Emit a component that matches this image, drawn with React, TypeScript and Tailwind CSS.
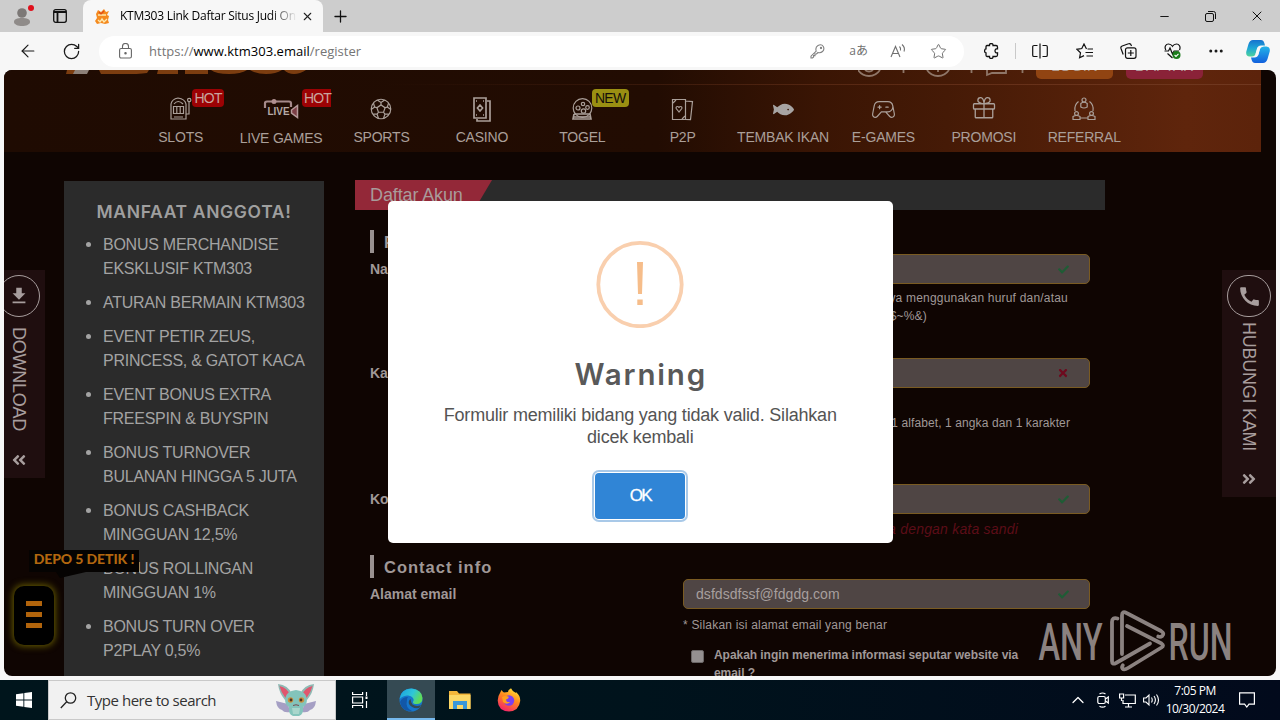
import type { ReactNode } from "react";
import { FaAngleDoubleLeft, FaAngleDoubleRight, FaCheck, FaFish, FaTimes } from "react-icons/fa";
import { MdCall, MdFileDownload } from "react-icons/md";
import { PiGameControllerLight, PiGiftLight, PiSoccerBallLight } from "react-icons/pi";
import { ArrowLeft, ChevronUp, Ellipsis, Minus, Plus, RotateCw, Star, X } from "lucide-react";

function TabStrip() {
  return (
    <div className="flex h-8 items-center bg-[#cdcdcd]">
      <svg className="ml-3 overflow-visible" width="20" height="20" viewBox="0 0 20 20">
        <circle cx="10" cy="7" r="4.8" fill="#7c7876" />
        <path d="M2 16c0-3 3-4 8-4s8 1 8 4c0 2.500-4 4-8 4s-8-1.500-8-4Z" fill="#8f8b89" />
        <circle cx="19" cy="2" r="3" fill="#e0101c" />
      </svg>
      <svg className="ml-[21px]" width="14" height="14" viewBox="0 0 14 14" fill="none" stroke="#111" strokeWidth="1.300">
        <rect x=".7" y=".7" width="12.600" height="12.600" rx="2" />
        <path d="M1 3h12M4.500 3v10" strokeWidth="1.800" />
      </svg>
      <div className="ml-4 flex h-8 w-[240px] items-center rounded-t-lg bg-[#f7f7f7] pl-3">
        <svg width="15" height="15" viewBox="0 0 15 15">
          <path d="M1 5 3 1l3 2 3-3 2 3 3-1-2 4 2 1-1 4 1 3-4 1-4-1-4 1-2-3 2-3Z" fill="#f58a1f" />
          <path d="M3 6h8M3 11l2 2 2-3 2 3 3-3" stroke="#fde9b0" strokeWidth="1.400" fill="none" />
          <path d="M4 3l2 2 3-3" stroke="#e04a1a" strokeWidth="1.200" fill="none" />
        </svg>
        <span className="ml-[10px] w-[177px] overflow-hidden bg-gradient-to-r from-black from-85% to-transparent bg-clip-text font-['Open_Sans',sans-serif] text-xs tracking-[-0.250px] whitespace-nowrap text-transparent">
          KTM303 Link Daftar Situs Judi On
        </span>
        <X className="ml-[4px]" size={13} strokeWidth={2} color="#222" />
      </div>
      <Plus className="ml-2" size={19} strokeWidth={1.600} color="#111" />
      <div className="ml-auto flex items-center gap-[34px] pr-[15px] text-[#111]">
        <Minus className="-mr-px ml-px" size={13} strokeWidth={1.800} />
        <svg className="-mr-px ml-px" width="11" height="11" viewBox="0 0 11 11" fill="none" stroke="#111">
          <rect x=".5" y="2.500" width="8" height="8" rx="1.500" />
          <path d="M3 .500h5.500a2 2 0 0 1 2 2V8" />
        </svg>
        <X size={16} strokeWidth={1.500} />
      </div>
    </div>
  );
}

function Toolbar() {
  return (
    <div className="flex h-[38px] items-center bg-[#f7f7f7] text-[#1a1a1a]">
      <ArrowLeft className="ml-[18px]" size={20} strokeWidth={1.400} />
      <RotateCw className="ml-6" size={19} strokeWidth={1.600} />
      <div className="ml-[18px] flex h-[31px] w-[865px] items-center rounded-full bg-white pl-5">
        <svg width="13" height="16" viewBox="0 0 13 16" fill="none" stroke="#666" strokeWidth="1.100">
          <rect x=".6" y="5.500" width="11.800" height="9.500" rx="1.500" />
          <path d="M3.500 5.500V3.500a3 3 0 0 1 6 0v2" />
          <circle cx="6.500" cy="10.200" r=".7" fill="#666" />
        </svg>
        <span className="mt-px ml-[17px] font-['Open_Sans',sans-serif] text-[13px] tracking-[0.020px] whitespace-nowrap text-[#757575]">
          https://<span className="text-black">www.ktm303.email</span>/register
        </span>
        <div className="ml-auto flex items-center pr-[17px] text-[#707070]">
          <svg width="15" height="15" viewBox="0 0 15 15" fill="none" stroke="#808080" strokeWidth="1.100">
            <path d="M6.200 7.200Q5 3.200 8 1.500q3.500-1.800 5.300 1 1.500 3-.8 5Q10.500 9.300 8 8.500L6.500 10H5v1.600H3.600V13L2.500 14H1v-1.800Z" />
            <circle cx="11" cy="4" r=".6" />
          </svg>
          <span className="ml-[24px] font-['Open_Sans','Noto_Sans_CJK_JP',sans-serif] text-[12px] leading-none">aあ</span>
          <svg className="ml-[22px]" width="17" height="16" viewBox="0 0 17 16" fill="none" stroke="#707070" strokeWidth="1.100">
            <path d="M1 14 5.500 3.500 10 14M2.600 10.500h5.800M9.500 3.500q1.500 1.500 1 4M12 1.500q3.500 3 2 7" />
          </svg>
          <Star className="ml-[23px]" size={17} strokeWidth={1.400} />
        </div>
      </div>
      <svg className="ml-[20px]" width="15" height="16" viewBox="0 0 15 16" fill="none" stroke="#111" strokeWidth="1.300">
        <path d="M3 2.500h2.500q-.2-2 1.700-2t1.800 2H12q1.500 0 1.500 1.500v1.800q-2.500-.3-2.500 2t2.500 2V12q0 1.500-1.500 1.500H9q.1 2-1.800 2t-1.700-2H3q-1 0-1-1.500V9.800Q.6 9.800.6 7.900T2 5.900V4q0-1.500 1-1.500Z" />
      </svg>
      <div className="ml-[16px] h-4 w-px bg-[#c9c9c9]" />
      <svg className="ml-4" width="16" height="16" viewBox="0 0 16 16" fill="none" stroke="#111" strokeWidth="1.200">
        <path d="M5.500 2.500H2a1.300 1.300 0 0 0-1.300 1.300v8.400A1.300 1.300 0 0 0 2 13.500h3.500M8 .5v15M10.500 2.500H14a1.300 1.300 0 0 1 1.300 1.300v8.400a1.300 1.300 0 0 1-1.300 1.300h-3.500" />
      </svg>
      <svg className="ml-[28px]" width="18" height="16" viewBox="0 0 18 16" fill="none" stroke="#111" strokeWidth="1.200">
        <path d="M10.500 6 8 1 5.800 5.500.8 6.300l3.700 3.500-.9 5 4.400-2.200M11.500 6H17M9.500 9.500H17M10.500 13H17" />
      </svg>
      <svg className="ml-[26px]" width="17" height="16" viewBox="0 0 17 16" fill="none" stroke="#111" strokeWidth="1.200">
        <path d="M3.200 11.500 1 5.500A2 2 0 0 1 2.200 3L8.500.8a2 2 0 0 1 2.600 1.200L11.500 3" />
        <rect x="5.500" y="4.800" width="10.500" height="10.500" rx="2" />
        <path d="M10.800 7v6M7.800 10h6" />
      </svg>
      <svg className="ml-[27px]" width="18" height="17" viewBox="0 0 18 17">
        <path
          d="M1.800 7C0 3.500 2 1 4.500 1S8 2.500 8.500 3.300C9 2.500 10 1 12.500 1S17 3.500 15.500 7M.5 8h4l1.500-3 2.500 6 1.600-3h5M3.500 10.500l5 4.500"
          fill="none"
          stroke="#111"
          strokeWidth="1.200"
        />
        <circle cx="12.500" cy="12" r="4" fill="#1c7c1c" />
        <path d="m10.600 12 1.400 1.400 2.500-2.600" fill="none" stroke="#fff" strokeWidth="1.100" />
      </svg>
      <Ellipsis className="ml-[25px]" size={18} strokeWidth={2} />
      <svg className="ml-[21px]" width="24" height="23" viewBox="0 0 24 23">
        <defs>
          <linearGradient id="copilotA" x1="0" y1="0" x2="0" y2="1">
            <stop offset="0" stopColor="#1672cf" />
            <stop offset=".5" stopColor="#1ea7d6" />
            <stop offset="1" stopColor="#4fd39b" />
          </linearGradient>
          <linearGradient id="copilotB" x1="0" y1="0" x2="0" y2="1">
            <stop offset="0" stopColor="#22b4e8" />
            <stop offset="1" stopColor="#1260dd" />
          </linearGradient>
        </defs>
        <path d="M7 0h8q2.500 0 3.300 3l.7 2.500h-4q-3 0-4 3L9.500 14q-.8 2.500-3.500 2.500H3.500Q-.5 16 .3 11.500L2.500 4Q3.800 0 7 0Z" fill="url(#copilotA)" />
        <path d="M17 23H9q-2.500 0-3.300-3L5 17.500h3.500q3 0 4-3L14 9q1-2.500 4-2.500h2.500q4 .5 3.200 5L21.500 19q-1.300 4-4.500 4Z" fill="url(#copilotB)" />
        <path d="m12.800 8-2 6.500" stroke="#f7f7f7" strokeWidth="2.600" />
      </svg>
    </div>
  );
}

const line = { fill: "none", stroke: "#aa9f99", strokeWidth: 1.200 };

function SlotIcon() {
  return (
    <svg width="23" height="24" viewBox="0 0 23 24" {...line}>
      <path d="M2 22V7q1-5 7-6 7 1 8 6v15ZM5 20h9M4.500 9.500h10v7h-10ZM7.800 9.500v7M11.200 9.500v7M5 7q4-5 9 0M17 17h3V5" />
      <circle cx="20.200" cy="3" r="1.700" />
    </svg>
  );
}

function LiveIcon() {
  return (
    <svg width="36" height="20" viewBox="0 0 36 20">
      <path d="M2 9V4q0-1.500 2-1.500h22q2 0 2 2V8" fill="none" stroke="#a58a8a" strokeWidth="2.200" />
      <circle cx="11" cy="2.500" r="2.500" fill="#b09090" />
      <path d="m28.500 11 6-4.500v12l-6-4.500Z" fill="#7c3f46" stroke="#b59a9a" strokeWidth="1.500" />
      <text x="4.500" y="16" fontSize="10.500" fontWeight="700" fill="#b5aaa6" fontFamily="Liberation Sans" textLength="22" lengthAdjust="spacingAndGlyphs">
        LIVE
      </text>
    </svg>
  );
}

function CasinoIcon() {
  return (
    <svg width="20" height="25" viewBox="0 0 20 25" {...line}>
      <path d="M2 1h12v20H2ZM15 4h3v20H5v-2" strokeWidth="1.700" />
      <path d="m8 8 2.600 3L8 14l-2.600-3ZM4 4h1M11 18h1M4 18h1M11 4h1" strokeWidth="1.600" />
    </svg>
  );
}

function TogelIcon() {
  return (
    <svg width="23" height="23" viewBox="0 0 23 23" {...line}>
      <circle cx="11.500" cy="10" r="9.300" />
      <path d="M3 16h16l1 5H2l1-5M2 19h18" strokeWidth="1.600" />
      <circle cx="12" cy="6" r="1.700" />
      <circle cx="7" cy="10" r="2" />
      <circle cx="12.500" cy="13" r="2.200" />
      <circle cx="16.500" cy="9.500" r="1.800" />
    </svg>
  );
}

function CardsIcon() {
  return (
    <svg width="23" height="23" viewBox="0 0 23 23" {...line}>
      <path d="M1.500 1.500h13v20h-13ZM14.500 3l7 .6-2 18-5-.2" />
      <path d="m8 14-2.800-3.500q-.5-2 1.300-2Q8 8.500 8 10q0-1.500 1.500-1.500 1.800 0 1.300 2ZM2 5l3-3M11 21l3-3" />
    </svg>
  );
}

function ReferralIcon() {
  return (
    <svg width="24" height="24" viewBox="0 0 24 24" {...line}>
      <circle cx="12" cy="3" r="2" />
      <path d="M8.800 10V6.500q3-2.500 6.400 0V10q-3.200 2-6.400 0ZM6.500 4.500Q2 8 3 14M17.500 4.500Q22 8 21 14M8 21h8" />
      <circle cx="4.500" cy="16.500" r="1.900" />
      <circle cx="19.500" cy="16.500" r="1.900" />
      <path d="M1 22.500v-3q3.500-2 7 0v3ZM16 22.500v-3q3.500-2 7 0v3Z" />
    </svg>
  );
}

type NavEntry = { label: string; icon: ReactNode; badge?: string };

const nav: NavEntry[] = [
  { label: "SLOTS", icon: <SlotIcon />, badge: "HOT" },
  { label: "LIVE GAMES", icon: <LiveIcon />, badge: "HOT" },
  { label: "SPORTS", icon: <PiSoccerBallLight size={26} /> },
  { label: "CASINO", icon: <CasinoIcon /> },
  { label: "TOGEL", icon: <TogelIcon />, badge: "NEW" },
  { label: "P2P", icon: <CardsIcon /> },
  { label: "TEMBAK IKAN", icon: <FaFish size={21} color="#a7a4a3" /> },
  { label: "E-GAMES", icon: <PiGameControllerLight size={25} /> },
  { label: "PROMOSI", icon: <PiGiftLight size={28} /> },
  { label: "REFERRAL", icon: <ReferralIcon /> },
];

function SiteHeader() {
  return (
    <div className="h-[82px] w-[1257px] bg-[linear-gradient(90deg,#1f0b02_0%,#220c02_52%,#3a1504_65%,#451a06_75%,#5f250c_94%,#5c230b_100%)]">
      <div className="flex h-[14px] items-start">
        <svg className="ml-[60px]" width="245" height="4" viewBox="0 0 245 4" fill="#7c3d10">
          <path d="M3 0h18l-4 4H2Z" />
          <path d="M11 0h14l-2 4H9Z" fill="#8c8078" />
          <path d="M35 0h50l-2 3q-12 2-46 1ZM94 0h20v4H93ZM121 0h23v4h-23ZM147 0h36q-6 4-18 4-13 0-18-4ZM186 0h32q-6 4-16 4t-16-4ZM220 0h22q-6 4-12 4t-10-4Z" />
        </svg>
        <div className="ml-[549px] flex items-start">
          <svg width="170" height="9" viewBox="0 0 170 9" fill="none" stroke="#8f7668" strokeWidth="1.800">
            <path d="M0 0q4 6 11 6t11-6M69 0q4 6 11 6t11-6M45.500 0v3M113.500 0v3M164.500 0v3M129 0v5l5-2h14V0" />
            <path d="M7 0q4 3 8 0M80 0v2" />
          </svg>
          <div className="ml-[8px] flex h-[9px] w-[77px] items-end justify-center overflow-hidden rounded-b-[5px] bg-[#914412] pb-[6px] font-['Liberation_Sans',sans-serif] text-[15px] leading-[15px] text-[#b29a8c]">
            LOGIN
          </div>
          <div className="ml-[13px] flex h-[9px] w-[77px] items-end justify-center overflow-hidden rounded-b-[5px] bg-[#8a2238] pb-[6px] font-['Liberation_Sans',sans-serif] text-[15px] leading-[15px] text-[#b29a9c]">
            DAFTAR
          </div>
        </div>
      </div>
      <div className="ml-[380px] h-px bg-gradient-to-r from-transparent to-[#703820]" />
      <div className="ml-[126.500px] flex h-[66px]">
        {nav.map((n) => (
          <div key={n.label} className="relative flex w-[100.400px] flex-col items-center text-[#aa9f99]">
            <div className="flex h-[43px] items-center justify-center pt-[5px]">{n.icon}</div>
            <span
              className={
                "font-['Liberation_Sans',sans-serif] text-[14px] leading-[18px] tracking-[-0.200px] whitespace-nowrap text-[#aa9f99] " +
                (n.label === "LIVE GAMES" ? "mt-px" : "")
              }
            >
              {n.label}
            </span>
            {n.badge && (
              <span
                className={
                  "absolute top-[4px] flex h-[18px] items-center rounded-[4px] px-[3px] font-['Liberation_Sans',sans-serif] text-[14px] tracking-[-0.800px] " +
                  (n.badge === "NEW"
                    ? "left-[60px] w-[37px] bg-[#9a8f12] tracking-[-0.300px] text-[#15100a]"
                    : n.label === "SLOTS"
                      ? "left-[61px] w-[32px] bg-[#9c0204] text-[#c9a59f]"
                      : "left-[71px] w-[29px] rounded-r-none bg-[#9c0204] pr-0 pl-[2px] text-[#c9a59f]")
                }
              >
                {n.badge}
              </span>
            )}
          </div>
        ))}
      </div>
    </div>
  );
}

const benefits = [
  ["BONUS MERCHANDISE", "EKSKLUSIF KTM303"],
  ["ATURAN BERMAIN KTM303"],
  ["EVENT PETIR ZEUS,", "PRINCESS, & GATOT KACA"],
  ["EVENT BONUS EXTRA", "FREESPIN & BUYSPIN"],
  ["BONUS TURNOVER", "BULANAN HINGGA 5 JUTA"],
  ["BONUS CASHBACK", "MINGGUAN 12,5%"],
  ["BONUS ROLLINGAN", "MINGGUAN 1%"],
  ["BONUS TURN OVER", "P2PLAY 0,5%"],
];

function Benefits() {
  return (
    <div className="mt-px h-[495px] w-[260px] bg-[#2b2b2b] text-[#a3a3a3]">
      <h2 className="h-[52px] pt-[19px] text-center font-['Inter',sans-serif] text-[17.500px] leading-6 font-semibold tracking-[0.650px] text-[#9f9f9f]">
        MANFAAT ANGGOTA!
      </h2>
      <ul className="flex flex-col gap-[10px] pl-[22px] font-['Liberation_Sans',sans-serif] text-[16px] leading-6 tracking-[-0.250px]">
        {benefits.map((b) => (
          <li key={b[0]} className="flex items-start">
            <span className="mt-[9px] mr-3 h-[5px] w-[5px] shrink-0 rounded-full bg-[#a3a3a3]" />
            <span className="whitespace-nowrap">
              {b.map((t) => (
                <span key={t} className="block">
                  {t}
                </span>
              ))}
            </span>
          </li>
        ))}
      </ul>
    </div>
  );
}

function SectionTitle({ children }: { children: ReactNode }) {
  return (
    <div className="ml-[15px] flex h-[23px] items-center border-l-[4px] border-[#999190] pt-[2px] pl-[10px] text-[16.500px] font-bold tracking-[1px] text-[#a09897]">
      {children}
    </div>
  );
}

function Field({ value, valid }: { value?: string; valid: boolean }) {
  return (
    <div className="flex h-[30px] items-center justify-between rounded-[5px] border border-[#7a5b22] bg-[#4f4544] pr-[20px] pl-3 text-[14px] tracking-[0.050px] text-[#a79f9e]">
      <span>{value}</span>
      {valid ? <FaCheck size={11} color="#1f5c35" /> : <FaTimes size={12} color="#6e0a1e" />}
    </div>
  );
}

function Row({ label, className, children }: { label: string; className: string; children: ReactNode }) {
  return (
    <div className={"flex pl-[15px] " + className}>
      <div className="w-[313px] text-[14px] leading-[30px] font-bold text-[#a09897]">{label}</div>
      <div className="w-[407px]">{children}</div>
    </div>
  );
}

function RegisterForm() {
  return (
    <div className="w-[750px] font-['Liberation_Sans',sans-serif]">
      <div className="h-[30px] bg-[#2b2b2b]">
        <div className="h-[30px] w-[137px] bg-[#932838] pl-[15px] text-[18px] leading-[30px] tracking-[-0.120px] text-[#a99b9b] [clip-path:polygon(0_0,100%_0,87%_100%,0_100%)]">
          Daftar Akun
        </div>
      </div>
      <div className="mt-5">
        <SectionTitle>Personal info</SectionTitle>
      </div>
      <Row label="Nama" className="mt-px h-[104px]">
        <Field valid />
        <p className="mt-[5px] w-[385px] text-right text-[12px] leading-[18px] tracking-[0.200px] text-[#a09897]">
          hanya menggunakan huruf dan/atau
        </p>
        <p className="w-[244px] text-right text-[12px] leading-[18px] tracking-[0.200px] text-[#a09897]">(!@#$~%&)</p>
      </Row>
      <Row label="Kata sandi" className="h-[126px]">
        <Field valid={false} />
        <p className="mt-[26px] w-[387px] text-right text-[12px] leading-[18px] tracking-[0.100px] text-[#a09897]">
          1 alfabet, 1 angka dan 1 karakter
        </p>
      </Row>
      <Row label="Konfirmasi" className="h-[71px]">
        <Field valid />
        <p className="mt-[5px] w-[335px] text-right text-[14px] leading-5 tracking-[0.200px] text-[#5c0d18] italic">
          sama dengan kata sandi
        </p>
      </Row>
      <SectionTitle>Contact info</SectionTitle>
      <Row label="Alamat email" className="mt-px">
        <Field value="dsfdsdfssf@fdgdg.com" valid />
        <p className="mt-[7px] text-[12px] leading-[18px] tracking-[0.200px] text-[#a09897]">
          * Silakan isi alamat email yang benar
        </p>
        <div className="mt-3 flex pl-2">
          <span className="mt-[4px] h-[13px] w-[13px] rounded-[2px] border border-[#6a6666] bg-[#949090]" />
          <p className="ml-[10px] text-[12px] leading-[18px] font-bold tracking-[-0.050px] whitespace-nowrap text-[#a09897]">
            Apakah ingin menerima informasi seputar website via
            <br />
            email ?
          </p>
        </div>
      </Row>
    </div>
  );
}

function SideTabs() {
  return (
    <>
      <div className="absolute top-[200px] left-0 flex h-[208px] w-[41px] flex-col items-center overflow-hidden bg-[#1f0e0f] pr-[12px] text-[#a79d9d]">
        <div className="mt-[5px] flex h-[42px] w-[42px] shrink-0 items-center justify-center rounded-full border border-[#a79d9d]">
          <MdFileDownload size={22} />
        </div>
        <span className="mt-[10px] font-['Liberation_Sans',sans-serif] text-[18px] leading-[20px] tracking-[-0.250px] [writing-mode:vertical-rl]">
          DOWNLOAD
        </span>
        <FaAngleDoubleLeft className="mt-[21px] shrink-0" size={16} />
      </div>
      <div className="absolute top-[200px] right-0 flex h-[227px] w-[54px] flex-col items-center bg-[#1f0e0f] text-[#a79d9d]">
        <div className="mt-[5px] flex h-[42px] w-[44px] shrink-0 items-center justify-center rounded-full border border-[#a79d9d]">
          <MdCall size={25} />
        </div>
        <span className="mt-[5px] font-['Liberation_Sans',sans-serif] text-[18px] leading-[20px] tracking-[-0.250px] [writing-mode:vertical-rl]">
          HUBUNGI KAMI
        </span>
        <FaAngleDoubleRight className="mt-[20px] shrink-0" size={16} />
      </div>
    </>
  );
}

function DepositMenu() {
  return (
    <div className="absolute top-[480px] left-[10px]">
      <div className="ml-[15px] flex h-[22px] w-[110px] items-center justify-center bg-[#050302] pb-[5px] font-['Lato',sans-serif] text-[14px] font-black tracking-[-0.100px] whitespace-nowrap text-[#b2670f]">
        DEPO 5 DETIK !
      </div>
      <svg className="ml-[42px]" width="30" height="6" viewBox="0 0 30 6">
        <path d="M0 0h30L4 6Z" fill="#050302" />
      </svg>
      <div className="mt-[8px] flex h-[59px] w-[40px] flex-col items-center justify-center gap-[6px] rounded-[10px] bg-black pb-[2px] shadow-[0_0_7px_1px_#6a6000]">
        <span className="h-[5px] w-[16px] bg-[#b1640c]" />
        <span className="h-[5px] w-[16px] bg-[#b1640c]" />
        <span className="h-[5px] w-[16px] bg-[#b1640c]" />
      </div>
    </div>
  );
}

function Watermark() {
  return (
    <svg className="absolute top-[538px] left-[1032px]" width="200" height="66" viewBox="0 0 200 66">
      <g fill="#8b8280" fontFamily="Roboto" fontSize="52" fontWeight="500">
        <text x="2.500" y="51.500" textLength="64" lengthAdjust="spacingAndGlyphs">
          ANY
        </text>
        <text x="132.500" y="51.500" textLength="64" lengthAdjust="spacingAndGlyphs">
          RUN
        </text>
      </g>
      <g fill="none" stroke="#8b8280" strokeWidth="3.800" strokeLinejoin="round" strokeLinecap="round">
        <path d="M81.500 10.500Q76 9 76 14V53q0 4 4 2l34-19.500" />
        <path d="M86 46V7.500q0-5 4.500-2.500L125 23q4 2.500 1.200 5-1.700 1.300-4 .500" />
        <path d="M91 18 125.500 35.500q3 2 0 4L92 60q-4 2.500-5.500.5-1-1.500.3-3.200" />
      </g>
    </svg>
  );
}

function WarningDialog() {
  return (
    <div className="absolute top-[131px] left-[384px] flex h-[342px] w-[504.500px] flex-col items-center rounded-[5px] bg-white">
      <svg className="mt-[39px]" width="88" height="88" viewBox="0 0 88 88">
        <circle cx="44" cy="44.500" r="41.700" fill="none" stroke="#f9cfae" strokeWidth="3.800" />
        <path d="M41 22h6l-1 32h-4ZM41.300 59.500h5.400v5.500h-5.400Z" fill="#f6bd8a" />
      </svg>
      <h1 className="mt-[26px] pl-[1px] font-['Inter',sans-serif] text-[29.500px] leading-[40px] font-semibold tracking-[1.800px] text-[#595959]">
        Warning
      </h1>
      <p className="mt-[10px] text-center font-['Liberation_Sans',sans-serif] text-[18px] leading-[22px] tracking-[-0.200px] whitespace-nowrap text-[#545454]">
        Formulir memiliki bidang yang tidak valid. Silahkan
        <br />
        dicek kembali
      </p>
      <button className="mt-[25px] flex h-[46px] w-[90px] items-center justify-center rounded-[4px] bg-[#3085d6] font-['Liberation_Sans',sans-serif] text-[17px] tracking-[-1.800px] text-white shadow-[0_0_0_1px_#fff,0_0_0_3px_#a9c9e8] [-webkit-text-stroke:0.3px_#fff]">
        OK
      </button>
    </div>
  );
}

function Taskbar() {
  return (
    <div className="flex h-10 items-center bg-gradient-to-r from-[#00151c] via-[#00131c] to-[#020a1c] font-['Open_Sans',sans-serif]">
      <svg className="ml-4" width="16" height="16" viewBox="0 0 16 16" fill="#fff">
        <path d="M0 2.300 7.400 1.200v6.400H0ZM8.300 1.100 16 0v7.600H8.300ZM0 8.500h7.400v6.300L0 13.700ZM8.300 8.500H16V16l-7.700-1.100Z" />
      </svg>
      <div className="ml-4 flex h-10 w-[288px] items-center border border-[#c9c9c9] bg-[#f1f1f1] pl-[11px]">
        <svg width="17" height="17" viewBox="0 0 17 17" fill="none" stroke="#222" strokeWidth="1.300">
          <circle cx="10.500" cy="6" r="5.200" />
          <path d="M6.700 9.800.8 16" />
        </svg>
        <span className="ml-[10px] text-[15px] tracking-[-0.470px] whitespace-nowrap text-[#333]">Type here to search</span>
        <svg className="mr-[19px] ml-auto" width="40" height="34" viewBox="0 0 40 34">
          <path d="M2 1q10 1 14 10l-7 6Q3 10 2 1ZM38 1q-10 1-14 10l7 6q6-7 7-16Z" fill="#8fb9b4" />
          <path d="M3.500 3q8 2 10.500 9l-4.500 3Q5 9 3.500 3ZM36.500 3q-8 2-10.500 9l4.500 3Q35 9 36.500 3Z" fill="#e0566e" />
          <path d="M12 21 0 18q1 8 6 9 2 3 8 2ZM28 21l12-3q-1 8-6 9-2 3-8 2Z" fill="#a59fc4" />
          <path d="M9 16q1-8 11-9 10 1 11 9 0 6-4 8 1 7-4 9h-6q-5-2-4-9-4-2-4-8Z" fill="#83c4bb" />
          <path d="M16 25h8l-1 6h-6Z" fill="#a9d6cc" />
          <circle cx="14.500" cy="17" r="2.700" fill="#c9913f" />
          <circle cx="25.500" cy="17" r="2.700" fill="#c9913f" />
          <circle cx="15" cy="17" r="1.400" fill="#4a3524" />
          <circle cx="25" cy="17" r="1.400" fill="#4a3524" />
          <path d="M17 22.500q3-1.500 6 0" stroke="#7a4a50" fill="none" />
        </svg>
      </div>
      <svg className="ml-4" width="17" height="16" viewBox="0 0 17 16" fill="none" stroke="#fff" strokeWidth="1.200">
        <path d="M.6 0v2.500h10V0M.6 16v-2.500h10V16M.6 5h10v6H.6ZM14.500 0v4M14.500 9v7" />
        <path d="M13.500 4.500h2v2.500h-2Z" fill="#fff" stroke="none" />
      </svg>
      <div className="ml-[18px] flex h-10 w-12 items-center justify-center border-b-2 border-[#76b9ed] bg-[#354a53] pt-[2px]">
        <svg width="24" height="24" viewBox="0 0 24 24">
          <defs>
            <linearGradient id="edgeTop" x1="0" y1="0" x2="1" y2=".4">
              <stop offset="0" stopColor="#1a9fe0" />
              <stop offset=".6" stopColor="#2fc6d8" />
              <stop offset="1" stopColor="#5fdc5a" />
            </linearGradient>
          </defs>
          <circle cx="12" cy="12" r="11.500" fill="#1676cc" />
          <path d="M.6 11Q2 .5 12.500.5 23 1.500 23.500 10q0 6-6 6-4 0-3.500-2 1.500-2 0-4-2-3-6-2.500-5 .5-7.400 3.500Z" fill="url(#edgeTop)" />
          <path d="M8 12q-2 8 5 11Q3 24 1 14q2-5 8-5-1 1-1 3Z" fill="#1257a8" />
          <path d="M13.500 16.500q4 2.500 8.500.5l-2 3q-7 1-10-4-1-3 1.500-5 .5 4 2 5.500Z" fill="#354a53" />
        </svg>
      </div>
      <svg className="ml-[14px]" width="22" height="20" viewBox="0 0 22 20">
        <path d="M0 1h8l2 2.500h11.500V19H0Z" fill="#f3b63a" />
        <path d="M0 5h21.500v14H0Z" fill="#fbd766" />
        <path d="M4 11h14v8h-4v-4H8v4H4Z" fill="#3a97d8" />
      </svg>
      <svg className="ml-[26px]" width="24" height="24" viewBox="0 0 24 24">
        <defs>
          <linearGradient id="fox" x1=".8" y1="0" x2=".3" y2="1">
            <stop offset="0" stopColor="#ffe83a" />
            <stop offset=".45" stopColor="#ff8a1c" />
            <stop offset="1" stopColor="#f5216b" />
          </linearGradient>
        </defs>
        <path d="M3 5q1-2 1.500-3Q6 4 7 4.500 9 4 11 4q0-2 3-3.800Q15 3 19 5q-.5-1 .5-.5Q23.500 8 23.200 13 22 23 12 23.500 1 23 .7 12.500.8 8 3 5Z" fill="url(#fox)" />
        <circle cx="12" cy="12.500" r="5.200" fill="#7a3ff0" />
        <path d="M5 9q4-2 7 0-1 2-3 2.500 0 3 4 2.500-3 3.500-7 0Z" fill="#ffa01c" />
      </svg>
      <div className="ml-auto flex items-center text-white">
        <ChevronUp size={20} strokeWidth={1.500} />
        <svg className="ml-[9px]" width="12" height="16" viewBox="0 0 12 16" fill="none" stroke="#fff" strokeWidth="1.200">
          <rect x=".8" y="4.500" width="7.500" height="7" rx="1.500" />
          <path d="M8.500 7 11.300 5v6L8.500 9M2.500 2q3-2 6 0M2.500 14.200q3 2 6 0" />
        </svg>
        <svg className="ml-[10px]" width="17" height="15" viewBox="0 0 17 15" fill="none" stroke="#fff" strokeWidth="1.200">
          <path d="M6 2h10.300v8.500H4V7M9.500 10.500V14M6 14h7M.6 1h4v4h-4ZM2.500 5v3" />
        </svg>
        <svg className="ml-[7px]" width="17" height="14" viewBox="0 0 17 14" fill="none" stroke="#fff" strokeWidth="1.100">
          <path d="M.6 5v4H3l3 3V2L3 5ZM8.500 4.500q1.500 2.500 0 5M11 3q2.800 4 0 8M13.500 1.500q4 5.500 0 11" />
        </svg>
        <div className="ml-[5px] w-[60px] text-center text-[12px] leading-[18px] tracking-[-0.500px] whitespace-nowrap">
          7:05 PM
          <br />
          10/30/2024
        </div>
        <svg className="mr-[25px] ml-[14px]" width="16" height="16" viewBox="0 0 16 16" fill="none" stroke="#fff" strokeWidth="1.200">
          <path d="M.6.8h14.800v11.400H10L7.800 15l-2.200-2.800h-5Z" />
        </svg>
      </div>
    </div>
  );
}

export default function App() {
  return (
    <div className="flex h-[720px] w-[1280px] flex-col overflow-hidden bg-[#f7f7f7]">
      <TabStrip />
      <Toolbar />
      <div className="relative mx-1 mb-1 h-[606px] overflow-hidden rounded-lg bg-[#0f0502]">
        <SiteHeader />
        <div className="mt-7 flex gap-[31px] pl-[60px]">
          <Benefits />
          <RegisterForm />
        </div>
        <SideTabs />
        <DepositMenu />
        <WarningDialog />
        <Watermark />
      </div>
      <Taskbar />
    </div>
  );
}
